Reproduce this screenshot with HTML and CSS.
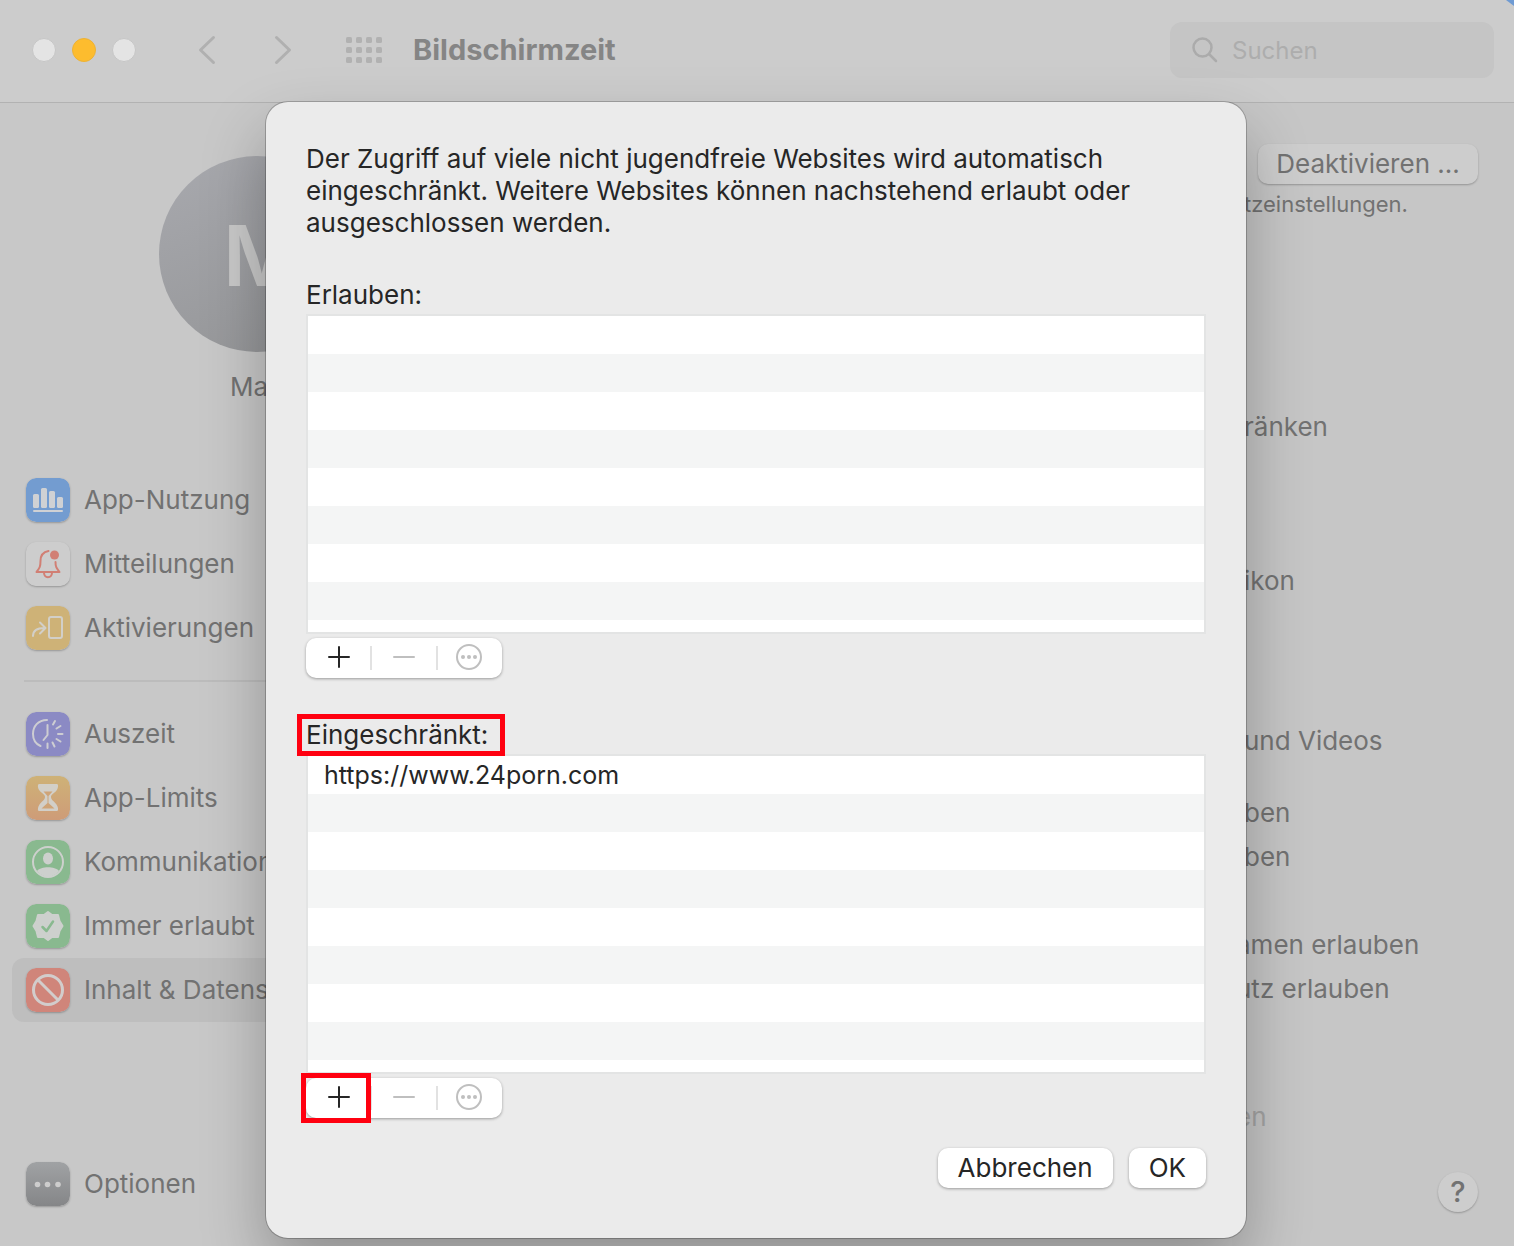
FILE: index.html
```
<!DOCTYPE html>
<html lang="de">
<head>
  <meta charset="UTF-8" />
  <meta name="viewport" content="width=device-width, initial-scale=1.0"/>
  <title>Bildschirmzeit</title>
  <link rel="stylesheet" href="styles.css">
</head>
<body>
  <div class="window">
    <header class="toolbar">
      <div class="lights">
        <span class="light"></span>
        <span class="light minimize"></span>
        <span class="light"></span>
      </div>
      <div class="nav">
        <button aria-label="Zurück"><svg width="18" height="30" viewBox="0 0 18 30"><path d="M15.500 2.500L2.500 15L15.500 27.500"/></svg></button>
        <button aria-label="Vorwärts"><svg width="18" height="30" viewBox="0 0 18 30"><path d="M2.500 2.500L15.500 15L2.500 27.500"/></svg></button>
      </div>
      <button class="grid-button" aria-label="Alle einblenden">
        <svg width="36" height="26" viewBox="0 0 36 26">
          <g id="dots"><rect x="0" width="6" height="6" rx="1.500"/><rect x="10" width="6" height="6" rx="1.500"/><rect x="20" width="6" height="6" rx="1.500"/><rect x="30" width="6" height="6" rx="1.500"/></g>
          <use href="#dots" y="10"/>
          <use href="#dots" y="20"/>
        </svg>
      </button>
      <h1>Bildschirmzeit</h1>
      <label class="search">
        <svg width="26" height="26" viewBox="0 0 26 26"><circle cx="10.500" cy="10.500" r="9"/><path d="M17.500 17.500L24 24"/></svg>
        <input type="search" placeholder="Suchen" aria-label="Suchen">
      </label>
      <span class="corner"></span>
    </header>

    <div class="main">
      <aside class="sidebar">
        <div class="avatar">M</div>
        <div class="name">Ma</div>

        <nav class="menu">
          <a href="#">
            <svg class="icon" viewBox="0 0 44 44"><rect width="44" height="44" rx="10" fill="#739cd0"/><g fill="#cfd1d4"><rect x="7" y="16" width="6" height="14" rx="1.500"/><rect x="15" y="10" width="6" height="20" rx="1.500"/><rect x="23" y="13" width="6" height="17" rx="1.500"/><rect x="31" y="19" width="6" height="11" rx="1.500"/><rect x="7" y="32" width="30" height="2" rx="1"/></g></svg>
            App-Nutzung
          </a>
          <a href="#">
            <svg class="icon" viewBox="0 0 44 44"><rect width="44" height="44" rx="10" fill="#cdcdcd"/><g fill="none" stroke="#d17f74" stroke-width="2" stroke-linejoin="round" stroke-linecap="round"><path d="M22.500 9C17 10 14.500 14 14.500 19C14.500 25 13.500 26 10.500 30H33.500C30.500 26 29.500 25 29.500 20"/><path d="M18 31C18.500 36.500 25.500 36.500 26 31"/></g><circle cx="28.500" cy="13" r="4.500" fill="#d17f74"/></svg>
            Mitteilungen
          </a>
          <a href="#">
            <svg class="icon" viewBox="0 0 44 44"><rect width="44" height="44" rx="10" fill="#ceb277"/><g fill="none" stroke="#d2cfc8" stroke-width="2" stroke-linejoin="round" stroke-linecap="round"><rect x="23" y="11" width="13" height="21" rx="2"/><path d="M7 30C7 25 10 22 18.500 22M14 16.500L19.500 22L14 27.500"/></g></svg>
            Aktivierungen
          </a>
        </nav>
        <hr>
        <nav class="menu">
          <a href="#">
            <svg class="icon" viewBox="0 0 44 44"><rect width="44" height="44" rx="10" fill="#8b8ac4"/><g fill="none" stroke="#cdcdd2" stroke-width="2" stroke-linecap="round"><path d="M21 8C12 8 7 14.500 7 22C7 27.500 10 32 14.500 34"/><path d="M21.500 13V23L17.500 28"/><path d="M27 12.500L29 9M30.500 16.500L34.500 14M32 22H36.500M30.500 27L34.500 29.500M26.500 30.500L28.500 34.500M21.500 31.500V36"/></g></svg>
            Auszeit
          </a>
          <a href="#">
            <svg class="icon" viewBox="0 0 44 44"><rect width="44" height="44" rx="10" fill="url(#orange)"/><defs><linearGradient id="orange" x2="0" y2="1"><stop stop-color="#ceb277"/><stop offset="1" stop-color="#ce9c78"/></linearGradient></defs><path d="M13 8H31C32.500 8 32.500 12 30.500 14.500C28.500 17 25 18.500 25 21C25 24 28.500 25.500 30.500 28.500C32.500 31.500 32.500 35 31 35H13C11.500 35 11.500 31.500 13.500 28.500C15.500 25.500 19 24 19 21C19 18.500 15.500 17 13.500 14.500C11.500 12 11.500 8 13 8Z" fill="#d2cfc8"/><path d="M17.500 15.500H26.500L22.500 20V27L28.500 32.500H15.500L21.500 27V20Z" fill="#cfa477"/></svg>
            App-Limits
          </a>
          <a href="#">
            <svg class="icon" viewBox="0 0 44 44"><rect width="44" height="44" rx="10" fill="#89b98f"/><circle cx="22" cy="22" r="15" fill="none" stroke="#cdd0cd" stroke-width="2"/><ellipse cx="22" cy="18.500" rx="5" ry="6" fill="#cdd0cd"/><path d="M11 31C15 26 29 26 33 31C27 38.500 17 38.500 11 31Z" fill="#cdd0cd"/></svg>
            Kommunikation
          </a>
          <a href="#">
            <svg class="icon" viewBox="0 0 44 44"><rect width="44" height="44" rx="10" fill="#89b98f"/><path d="M22 8L26 11H32L33.500 17L36.500 22L33.500 27L32 33H26L22 36L18 33H12L10.500 27L7.500 22L10.500 17L12 11H18Z" fill="#cdd0cd" stroke="#cdd0cd" stroke-width="2" stroke-linejoin="round"/><path d="M16.500 23L20.500 27L27 17.500" fill="none" stroke="#89b98f" stroke-width="2.500" stroke-linecap="round" stroke-linejoin="round"/></svg>
            Immer erlaubt
          </a>
          <a href="#" class="active">
            <svg class="icon" viewBox="0 0 44 44"><rect width="44" height="44" rx="10" fill="#d0857a"/><g fill="none" stroke="#d2cdcc" stroke-width="3"><circle cx="22" cy="22" r="14.500"/><path d="M12 12L32 32"/></g></svg>
            Inhalt &amp; Datens
          </a>
        </nav>

        <nav class="menu options">
          <a href="#">
            <svg class="icon" viewBox="0 0 44 44"><defs><linearGradient id="gray" x2="0" y2="1"><stop stop-color="#a0a2a4"/><stop offset="1" stop-color="#858688"/></linearGradient></defs><rect width="44" height="44" rx="10" fill="url(#gray)"/><g fill="#cdcdcd"><circle cx="11.500" cy="22.500" r="2.800"/><circle cx="21.500" cy="22.500" r="2.800"/><circle cx="32" cy="22.500" r="2.800"/></g></svg>
            Optionen
          </a>
        </nav>
      </aside>

      <section class="content">
        <button class="deactivate">Deaktivieren ...</button>
        <p class="hint">tzeinstellungen.</p>
        <p class="row first">ränken</p>
        <p class="row second">ikon</p>
        <p class="row third">und Videos</p>
        <div class="group">
          <p class="row">ben</p>
          <p class="row">ben</p>
        </div>
        <div class="group wide">
          <p class="row">amen erlauben</p>
          <p class="row">utz erlauben</p>
        </div>
        <p class="row disabled">en</p>
        <button class="help" aria-label="Hilfe">?</button>
      </section>
    </div>

    <div class="dialog" role="dialog" aria-describedby="intro">
      <p id="intro">Der Zugriff auf viele nicht jugendfreie Websites wird automatisch<br>
        eingeschränkt. Weitere Websites können nachstehend erlaubt oder<br>
        ausgeschlossen werden.</p>

      <div class="sites">
        <h2 id="allow"><span>Erlauben:</span></h2>
        <ul aria-labelledby="allow"></ul>
        <div class="segment">
          <button aria-label="Hinzufügen"><svg width="22" height="22" viewBox="0 0 22 22"><path d="M11 1V21M1 11H21"/></svg></button>
          <button aria-label="Entfernen" disabled><svg width="22" height="22" viewBox="0 0 22 22"><path d="M1 11H21"/></svg></button>
          <button aria-label="Mehr" disabled><svg width="26" height="26" viewBox="0 0 26 26"><circle cx="13" cy="13" r="12"/><g class="fill"><circle cx="7" cy="13" r="2"/><circle cx="13" cy="13" r="2"/><circle cx="19" cy="13" r="2"/></g></svg></button>
        </div>
      </div>

      <div class="sites">
        <h2 id="deny"><span class="marked">Eingeschränkt:</span></h2>
        <ul aria-labelledby="deny">
          <li>https://www.24porn.com</li>
        </ul>
        <div class="segment">
          <button class="marked" aria-label="Hinzufügen"><svg width="22" height="22" viewBox="0 0 22 22"><path d="M11 1V21M1 11H21"/></svg></button>
          <button aria-label="Entfernen" disabled><svg width="22" height="22" viewBox="0 0 22 22"><path d="M1 11H21"/></svg></button>
          <button aria-label="Mehr" disabled><svg width="26" height="26" viewBox="0 0 26 26"><circle cx="13" cy="13" r="12"/><g class="fill"><circle cx="7" cy="13" r="2"/><circle cx="13" cy="13" r="2"/><circle cx="19" cy="13" r="2"/></g></svg></button>
        </div>
      </div>

      <div class="actions">
        <button>Abbrechen</button>
        <button>OK</button>
      </div>
    </div>
  </div>
</body>
</html>
```
FILE: styles.css
```
*, *::before, *::after { margin: 0; padding: 0; box-sizing: border-box; }
body {
  background: #c8c8c8;
  color: #727272;
  font-family: Inter, "Liberation Sans", sans-serif;
  font-size: 26px;
  line-height: 32px;
}
button, input {
  font: inherit;
  color: inherit;
  border: none;
  background: none;
}
svg { display: block; flex: none; }
.window {
  position: relative;
  display: flex;
  flex-direction: column;
  min-height: 100vh;
  overflow: hidden;
}

/* toolbar */
.toolbar {
  position: relative;
  display: flex;
  align-items: center;
  height: 103px;
  padding: 0 20px 2px 32px;
  background: #cccccc;
  border-bottom: 1px solid #b2b2b2;
}
.lights { display: flex; gap: 16px; }
.light {
  width: 24px;
  height: 24px;
  border-radius: 50%;
  background: #e4e4e4;
  border: 1px solid #c6c6c6;
}
.light.minimize { background: #fdbc2e; border-color: #edb235; }
.nav { display: flex; gap: 58px; margin-left: 62px; }
.nav svg {
  fill: none;
  stroke: #b0b0b0;
  stroke-width: 3;
  stroke-linecap: round;
  stroke-linejoin: round;
}
.grid-button { margin-left: 54px; fill: #b1b1b1; }
h1 {
  margin-left: 31px;
  font-size: 29px;
  font-weight: 700;
  color: #858585;
}
.search {
  display: flex;
  align-items: center;
  gap: 14px;
  width: 324px;
  height: 56px;
  margin-left: auto;
  padding: 0 22px;
  border-radius: 12px;
  background: #c5c5c5;
}
.search svg {
  fill: none;
  stroke: #ababab;
  stroke-width: 2.5;
  stroke-linecap: round;
}
.search input { width: 100%; min-width: 0; padding-top: 2px; outline: none; font-size: 24px; }
.search input::placeholder { color: #adadad; opacity: 1; }
.corner {
  position: absolute;
  top: 0;
  right: 0;
  width: 8px;
  height: 6px;
  background: #6f9bd3;
  clip-path: polygon(0 0, 100% 0, 100% 100%);
}

/* sidebar */
.main { display: flex; flex: 1; }
.sidebar {
  display: flex;
  flex-direction: column;
  width: 380px;
  padding: 53px 12px 30px;
}
.avatar {
  width: 196px;
  height: 196px;
  margin-left: 147px;
  padding-left: 64px;
  border-radius: 50%;
  background: linear-gradient(160deg, #a8a9ae, #949597);
  color: #c9c9c9;
  font-size: 84px;
  font-weight: 600;
  line-height: 200px;
}
.name { margin: 19px 0 65px 218px; }
.menu a {
  display: flex;
  align-items: center;
  gap: 14px;
  height: 64px;
  padding-left: 14px;
  border-radius: 12px;
  color: inherit;
  text-decoration: none;
  white-space: nowrap;
}
.menu a.active { background: #bebebe; }
.icon {
  width: 44px;
  height: 44px;
  border-radius: 10px;
  box-shadow: 0 1px 2px rgba(0, 0, 0, 0.25);
}
hr {
  height: 2px;
  margin: 20px 12px;
  border: none;
  background: #bcbcbc;
}
.options { margin-top: auto; }

/* content */
.content {
  display: flex;
  flex-direction: column;
  width: 282px;
  margin-left: auto;
  padding: 41px 36px 34px 0;
  background: #c6c6c6;
}
.content p { padding-left: 12px; white-space: nowrap; }
.deactivate {
  align-self: flex-end;
  width: 220px;
  height: 40px;
  border-radius: 10px;
  background: #cdcdcd;
  box-shadow: 0 1px 2px rgba(0, 0, 0, 0.25);
}
.hint { margin-top: 4px; font-size: 22px; }
.row.first { margin-top: 191px; }
.row.second { margin-top: 122px; }
.row.third { margin-top: 128px; }
.group {
  display: flex;
  flex-direction: column;
  gap: 12px;
  margin-top: 40px;
}
.group.wide { margin-top: 56px; }
.content .wide p, .content .disabled { padding-left: 4px; }
.row.disabled { margin-top: 96px; color: #a3a3a3; }
.help {
  align-self: flex-end;
  width: 40px;
  height: 40px;
  margin-top: auto;
  border-radius: 50%;
  background: #cdcdcd;
  box-shadow: 0 1px 2px rgba(0, 0, 0, 0.25);
  font-size: 29px;
  font-weight: 500;
}

/* dialog */
.dialog {
  position: absolute;
  top: 102px;
  left: 266px;
  right: 268px;
  padding: 41px 40px 50px;
  border-radius: 22px;
  background: #ebebeb;
  color: #262626;
  box-shadow: 0 0 0 1px rgba(0, 0, 0, 0.22), 0 32px 64px rgba(0, 0, 0, 0.28);
}
.sites { margin-top: 40px; }
.sites + .sites { margin-top: 41px; }
.sites h2 {
  font-size: 26px;
  font-weight: 400;
  margin-bottom: 3px;
}
.sites ul {
  height: 320px;
  border: 2px solid #e3e4e4;
  background: repeating-linear-gradient(#fff 0 38px, #f4f5f5 38px 76px);
  list-style: none;
}
.sites li {
  height: 38px;
  padding-left: 16px;
  font-size: 25px;
  line-height: 38px;
}
.segment {
  display: flex;
  width: 196px;
  height: 40px;
  margin-top: 4px;
  border-radius: 10px;
  background: #fff;
  box-shadow: 0 1px 3px rgba(0, 0, 0, 0.35);
}
.segment button {
  position: relative;
  display: flex;
  align-items: center;
  justify-content: center;
  flex: 1;
  padding-bottom: 2px;
}
.segment button + button::before {
  content: "";
  position: absolute;
  left: -1px;
  top: 8px;
  width: 2px;
  height: 24px;
  background: #e2e2e2;
}
.segment svg {
  fill: none;
  stroke: #262626;
  stroke-width: 2;
  stroke-linecap: round;
}
.segment button:disabled svg { stroke: #bfbfbf; }
.segment .fill { fill: #bfbfbf; stroke: none; }

/* red frames */
.sites span.marked { position: relative; }
.marked::after {
  content: "";
  position: absolute;
  z-index: 1;
  border: 5px solid #ff0010;
}
span.marked::after { top: -5px; left: -9px; width: 208px; height: 42px; }
button.marked::after { top: -5px; left: -5px; width: 70px; height: 50px; }

.actions {
  display: flex;
  justify-content: flex-end;
  gap: 16px;
  margin-top: 30px;
}
.actions button {
  height: 40px;
  padding: 0 20px;
  border-radius: 10px;
  background: #fff;
  box-shadow: 0 1px 3px rgba(0, 0, 0, 0.35);
}
```
